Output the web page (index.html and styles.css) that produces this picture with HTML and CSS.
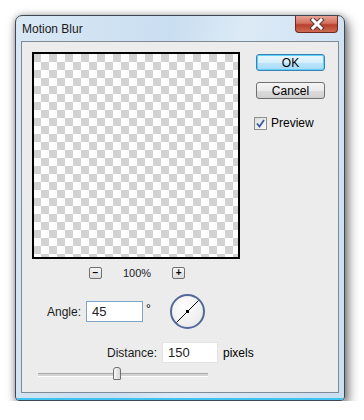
FILE: index.html
```html
<!DOCTYPE html>
<html>
<head>
	<meta charset="utf-8">
	<title>Motion Blur</title>
	<link rel="stylesheet" href="styles.css">
</head>
<body>
  <div class="window">
    <div class="title-bar">
      <span class="title">Motion Blur</span>
      <div class="close-btn">
        <svg width="18" height="12" viewBox="0 0 18 12">
          <path d="M5 2 L13 10 M13 2 L5 10" stroke="#5a3a3a" stroke-width="5" stroke-linecap="square"/>
          <path d="M5 2 L13 10 M13 2 L5 10" stroke="#fff" stroke-width="3" stroke-linecap="square"/>
        </svg>
      </div>
    </div>

    <div class="client">
      <div class="top-row">
        <div class="preview-col">
          <div class="preview"></div>
          <div class="zoom-row">
            <span class="zoom-btn">&minus;</span>
            <span class="zoom-val">100%</span>
            <span class="zoom-btn">+</span>
          </div>
        </div>
        <div class="btn-col">
          <button class="btn btn-default">OK</button>
          <button class="btn">Cancel</button>
          <label class="check">
            <span class="check-box">
              <svg width="9" height="9" viewBox="0 0 9 9"><path d="M1 4.5 L3.5 7.5 L8 1" fill="none" stroke="#3a5aa0" stroke-width="1.8"/></svg>
            </span>
            Preview
          </label>
        </div>
      </div>

      <div class="angle-row">
        <span class="lbl">Angle:</span>
        <div class="field field-angle">45</div>
        <span class="deg">&deg;</span>
        <div class="dial">
          <svg width="31" height="31" viewBox="0 0 31 31">
            <line x1="4" y1="27" x2="27" y2="4" stroke="#000" stroke-width="1"/>
            <rect x="14" y="14" width="3" height="3" fill="#000"/>
          </svg>
        </div>
      </div>

      <div class="dist-row">
        <span class="lbl">Distance:</span>
        <div class="field field-dist">150</div>
        <span class="unit">pixels</span>
      </div>

      <div class="slider">
        <div class="track"></div>
        <div class="thumb"></div>
      </div>
    </div>
  </div>
</body>
</html>
```

FILE: styles.css
```css
body{
  margin: 0;
  padding: 0;
  background-color: #fff;
  font-family: "Liberation Sans", Arial, sans-serif;
  font-size: 11px;
  color: #000;
}

.window{
  margin: 15px 0 0 15px;
  width: 330px;
  height: 386px;
  box-sizing: border-box;
  border: 1px solid #3f4852;
  border-radius: 7px 7px 4px 4px;
  background: linear-gradient(100deg, #d9e8f5 0%, #c9def1 40%, #dceaf6 58%, #cadef1 100%);
  box-shadow: 3px 5px 12px rgba(0, 0, 0, 0.55), 0 0 6px rgba(0, 0, 0, 0.25);
  padding: 0 5px 7px 5px;
  position: relative;
  overflow: hidden;
}

.window::after{
  content: "";
  position: absolute;
  left: 1px;
  right: 1px;
  bottom: 0;
  height: 2px;
  background-color: #3cc3f0;
}

.title-bar{
  height: 25px;
  display: flex;
  align-items: flex-start;
  justify-content: space-between;
}

.title{
  font-size: 12px;
  margin: 6px 0 0 1px;
  color: #1a1a1a;
}

.close-btn{
  width: 41px;
  height: 16px;
  margin-right: 1px;
  border: 1px solid #6e2a22;
  border-top: none;
  border-radius: 0 0 4px 4px;
  background: linear-gradient(#e7a293 0%, #d4705e 45%, #b8402c 55%, #cf6a52 100%);
  display: flex;
  align-items: center;
  justify-content: center;
}

.client{
  height: 352px;
  box-sizing: border-box;
  border: 1px solid #7f8a98;
  background-color: #ececec;
  padding: 10px 0 0 10px;
}

.top-row{
  display: flex;
}

.preview{
  width: 208px;
  height: 207px;
  box-sizing: border-box;
  border: 2px solid #000;
  background-color: #fff;
  background-image:
    linear-gradient(45deg, #d2d2d2 25%, transparent 25%, transparent 75%, #d2d2d2 75%),
    linear-gradient(45deg, #d2d2d2 25%, transparent 25%, transparent 75%, #d2d2d2 75%);
  background-size: 16px 16px;
  background-position: 7px 0, 15px 8px;
}

.zoom-row{
  display: flex;
  align-items: center;
  justify-content: center;
  margin-top: 8px;
  padding-left: 2px;
}

.zoom-btn{
  width: 11px;
  height: 10px;
  border: 1px solid #707070;
  border-radius: 2px;
  background: linear-gradient(#f6f6f6, #dcdcdc);
  font-size: 10px;
  font-weight: bold;
  line-height: 9px;
  text-align: center;
}

.zoom-val{
  margin: 0 21px;
  font-size: 11px;
  color: #1b1b2a;
}

.btn-col{
  margin-left: 16px;
  margin-top: 2px;
  display: flex;
  flex-direction: column;
}

.btn{
  width: 69px;
  height: 17px;
  border: 1px solid #707070;
  border-radius: 3px;
  background: linear-gradient(#f4f4f4 0%, #ebebeb 50%, #dddddd 51%, #cfcfcf 100%);
  font-family: "Liberation Sans", Arial, sans-serif;
  font-size: 12px;
  padding: 0;
  line-height: 14px;
  color: #000;
  margin-bottom: 11px;
}

.btn-default{
  border-color: #3c7fb1;
  background: linear-gradient(#e9f6fd 0%, #d6effc 50%, #bee6fd 51%, #a7d9f5 100%);
  box-shadow: inset 0 0 0 1px #5fd1ff;
}

.check{
  display: flex;
  align-items: center;
  font-size: 12px;
  margin-top: 6px;
  margin-left: -2px;
}

.check-box{
  width: 11px;
  height: 11px;
  border: 1px solid #8e8f8f;
  background: linear-gradient(135deg, #dcdcdc, #fbfbfb);
  margin-right: 4px;
  display: flex;
  align-items: center;
  justify-content: center;
}

.lbl{
  font-size: 12px;
  color: #1a1a1a;
}

.angle-row{
  display: flex;
  align-items: center;
  margin-top: 15px;
  padding-left: 15px;
}

.field{
  height: 19px;
  box-sizing: content-box;
  border: 1px solid #abadb3;
  background-color: #fff;
  font-size: 13px;
  line-height: 19px;
  padding-left: 5px;
  color: #222;
}

.field-angle{
  width: 50px;
  margin-left: 5px;
  border-color: #7fa4c6;
}

.deg{
  font-size: 12px;
  margin: -5px 0 0 3px;
}

.dial{
  width: 31px;
  height: 31px;
  border: 2px solid #52679a;
  border-radius: 50%;
  background: radial-gradient(circle at 40% 35%, #ffffff, #ededed 70%, #e0e0e0);
  margin-left: 19px;
  display: flex;
  align-items: center;
  justify-content: center;
  overflow: hidden;
}

.dist-row{
  display: flex;
  align-items: center;
  margin-top: 13px;
  padding-left: 75px;
}

.field-dist{
  width: 49px;
  margin-left: 5px;
  border-color: #e3e3e3;
}

.unit{
  font-size: 12px;
  margin-left: 5px;
}

.slider{
  position: relative;
  width: 170px;
  height: 14px;
  margin: 3px 0 0 6px;
}

.track{
  position: absolute;
  left: 0;
  right: 0;
  top: 7px;
  height: 2px;
  border-top: 1px solid #a8a8a8;
  border-bottom: 1px solid #fff;
  background-color: #d4d4d4;
}

.thumb{
  position: absolute;
  left: 75px;
  top: 1px;
  width: 6px;
  height: 11px;
  border: 1px solid #707070;
  border-radius: 3px 3px 1px 1px;
  background: linear-gradient(90deg, #f6f6f6, #d8d8d8);
}
```
